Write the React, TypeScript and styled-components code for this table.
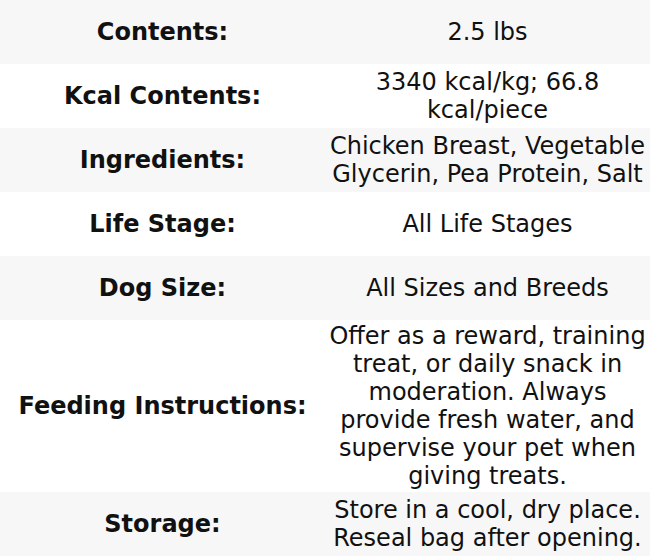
import React from 'react';
import styled, { createGlobalStyle } from 'styled-components';

type Spec = {
    label: string;
    value: string;
};

const specs: Spec[] = [
    { label: 'Contents:', value: '2.5 lbs' },
    { label: 'Kcal Contents:', value: '3340 kcal/kg; 66.8 kcal/piece' },
    { label: 'Ingredients:', value: 'Chicken Breast, Vegetable Glycerin, Pea Protein, Salt' },
    { label: 'Life Stage:', value: 'All Life Stages' },
    { label: 'Dog Size:', value: 'All Sizes and Breeds' },
    {
        label: 'Feeding Instructions:',
        value: 'Offer as a reward, training treat, or daily snack in moderation. Always provide fresh water, and supervise your pet when giving treats.',
    },
    { label: 'Storage:', value: 'Store in a cool, dry place. Reseal bag after opening.' },
];

const GlobalStyle = createGlobalStyle`
    body {
        margin: 0;
        background: #fff;
        font-family: "DejaVu Sans", sans-serif;
    }
`;

const SpecTable = styled.table`
    width: 650px;
    border-collapse: collapse;
    table-layout: fixed;
`;

const Row = styled.tr<{ $shaded: boolean }>`
    background: ${(p) => (p.$shaded ? '#f7f7f7' : '#ffffff')};
`;

const Cell = styled.td`
    width: 50%;
    height: 64px;
    box-sizing: border-box;
    padding: 2px 1px;
    text-align: center;
    vertical-align: middle;
    font-size: 24px;
    line-height: 28px;
    color: #111;
`;

const Label = styled(Cell)`
    font-weight: 700;
`;

const App = () => {
    return (
        <>
            <GlobalStyle />
            <SpecTable>
                <tbody>
                    {specs.map((spec, i) => (
                        <Row key={spec.label} $shaded={i % 2 === 0}>
                            <Label>{spec.label}</Label>
                            <Cell>{spec.value}</Cell>
                        </Row>
                    ))}
                </tbody>
            </SpecTable>
        </>
    );
};

export default App;
